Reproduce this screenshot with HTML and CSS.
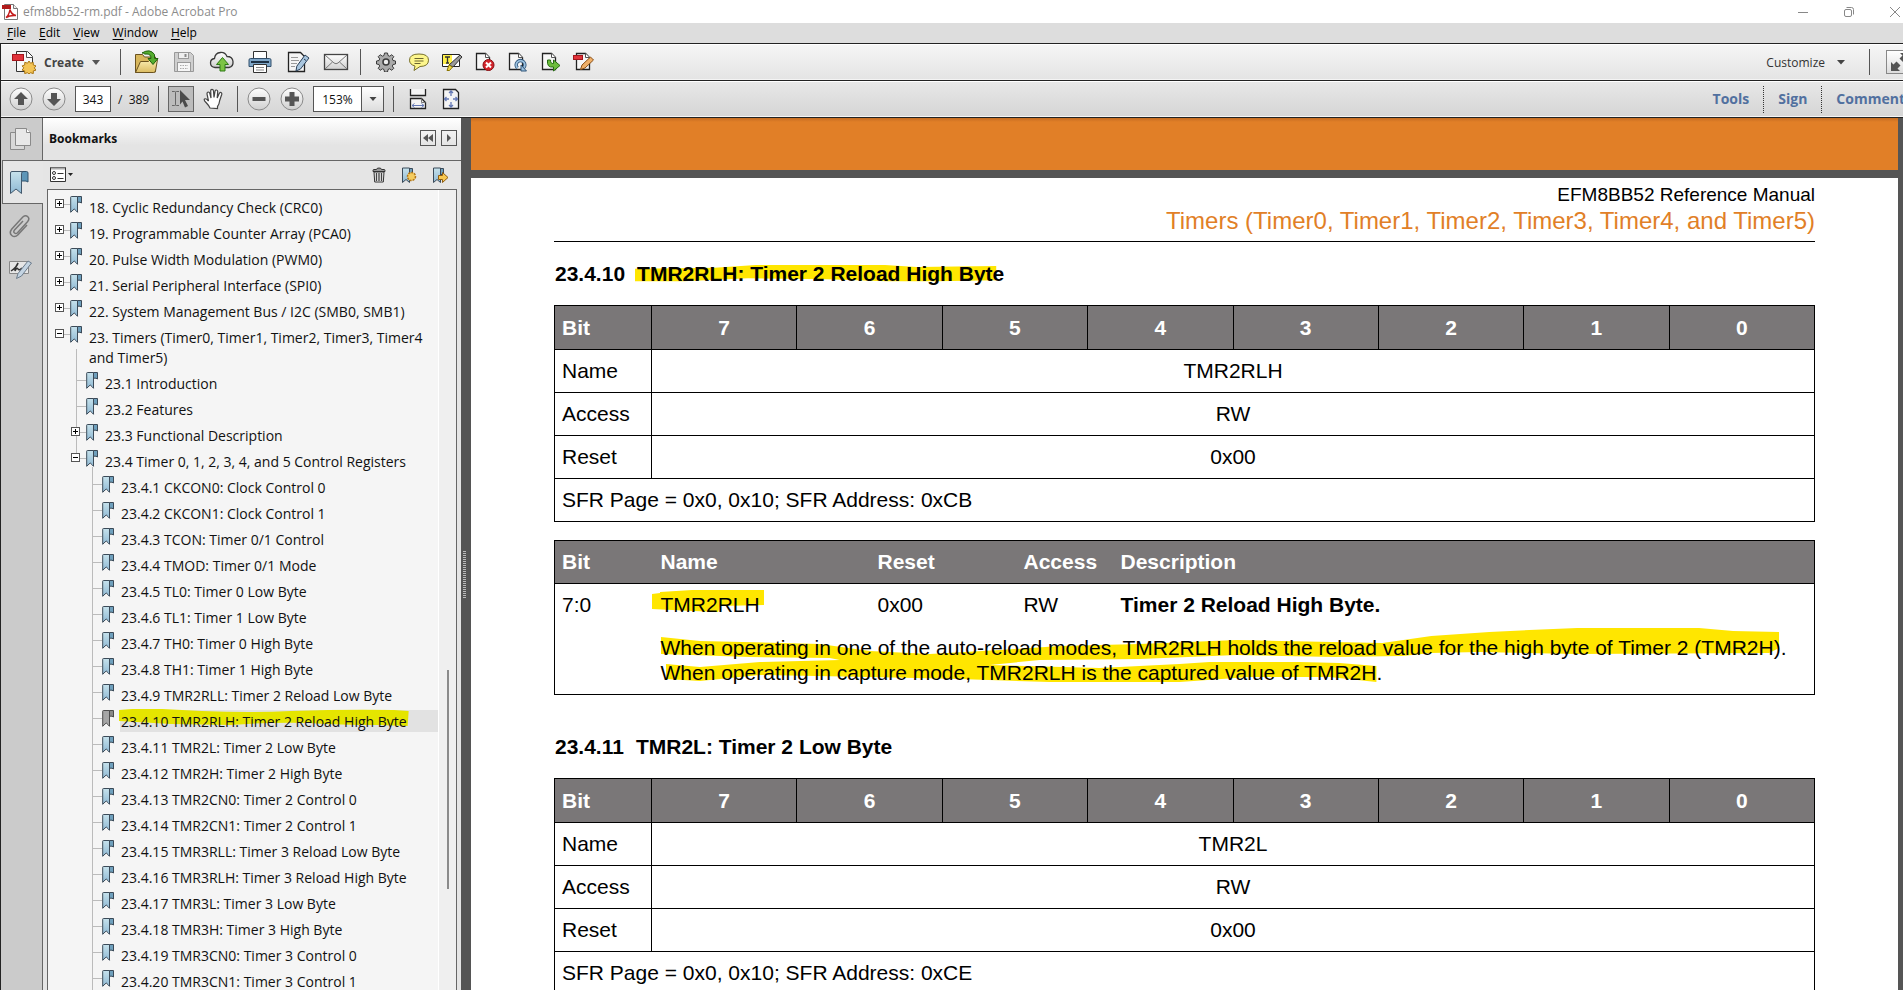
FILE: index.html
```html
<!DOCTYPE html>
<html lang="en">
<head>
<meta charset="utf-8">
<title>efm8bb52-rm.pdf - Adobe Acrobat Pro</title>
<link rel="stylesheet" href="styles.css">
</head>
<body>
<svg class="defs" aria-hidden="true">
  <defs>
    <linearGradient id="g-blue" x1="0" y1="0" x2="0" y2="1"><stop offset="0" stop-color="#c6e2ec"/><stop offset="1" stop-color="#8fb9d4"/></linearGradient>
    <linearGradient id="g-silver" x1="0" y1="0" x2="0" y2="1"><stop offset="0" stop-color="#ffffff"/><stop offset="1" stop-color="#cfcfcf"/></linearGradient>
    <linearGradient id="g-folder" x1="0" y1="0" x2="0" y2="1"><stop offset="0" stop-color="#fbeeb4"/><stop offset="1" stop-color="#dcbc62"/></linearGradient>
  </defs>
  <symbol id="bm" viewBox="0 0 12 17">
    <path d="M7.500 .5h4v6.500l-1.500-.8h-2.500z" fill="#6fa0bd" stroke="#3b4a58"/>
    <path d="M.7 1.200q0-.7.7-.7h6.100v15.800l-1.100-1.300-2.200-2-2.200 2-1.300 1.300z" fill="url(#g-blue)" stroke="#3b4a58"/>
  </symbol>
  <symbol id="bm-grey" viewBox="0 0 12 17">
    <path d="M7.500 .5h4v6.500l-1.500-.8h-2.500z" fill="#8a8a8a" stroke="#4d4d4d"/>
    <path d="M.7 1.200q0-.7.7-.7h6.100v15.800l-1.100-1.300-2.200-2-2.200 2-1.300 1.300z" fill="#a6a6a6" stroke="#4d4d4d"/>
  </symbol>
</svg>

<div class="app">
  <header class="titlebar">
    <svg class="app-icon" width="16" height="16" viewBox="0 0 16 16" aria-hidden="true"><path d="M2.500 .5h9l4 4v11h-13z" fill="#fff" stroke="#777"/><path d="M11.500 .5v4h4" fill="#eee" stroke="#777"/><rect x="0" y="1" width="9" height="4" fill="#b01c1c"/><path d="M4 13.500q3-2 4-8 1 5 6 6-6-.5-10 2z" fill="none" stroke="#c41d1d" stroke-width="1.500"/></svg>
    <span class="doc-name">efm8bb52-rm.pdf - Adobe Acrobat Pro</span>
    <div class="win-controls">
      <button type="button" aria-label="Minimize"><svg width="12" height="12" viewBox="0 0 12 12"><path d="M1 6.500h10" stroke="#888"/></svg></button>
      <button type="button" aria-label="Restore"><svg width="12" height="12" viewBox="0 0 12 12" fill="none" stroke="#888"><rect x="1.500" y="3.500" width="7" height="7" rx="1.500"/><path d="M3.500 1.500h5q2 0 2 2v5"/></svg></button>
      <button type="button" aria-label="Close"><svg width="12" height="12" viewBox="0 0 12 12"><path d="M1 1l10 10M11 1l-10 10" stroke="#888"/></svg></button>
    </div>
  </header>

  <nav class="menubar">
    <button type="button"><u>F</u>ile</button>
    <button type="button"><u>E</u>dit</button>
    <button type="button"><u>V</u>iew</button>
    <button type="button"><u>W</u>indow</button>
    <button type="button"><u>H</u>elp</button>
  </nav>

  <div class="toolbar toolbar-main">
    <button type="button" class="create">
      <svg width="24" height="24" viewBox="0 0 24 24"><path d="M4.500 1.500h11l5 5v15h-16z" fill="#f8f8f8" stroke="#333"/><path d="M14.500 1.500v6h6" fill="#fff" stroke="#555"/><rect x=".5" y="4.500" width="11" height="6" fill="#e0323a" stroke="#a3161c"/><path d="M17 11l1.500 2.200 2.700-.9.100 2.700 2.700.9-1.700 2 1.700 2.200-2.700.8v2.700l-2.700-.9-1.600 1.300-1.600-1.300-2.700.9v-2.700l-2.600-.8 1.600-2.200-1.600-2 2.600-.9.100-2.700 2.700.9z" fill="#f3c455" stroke="#a87414"/></svg>
      <span>Create</span>
      <svg class="caret" width="8" height="5" viewBox="0 0 8 5"><path d="M0 0h8l-4 5z" fill="#555"/></svg>
    </button>
    <span class="sep"></span>
    <div class="group group-wide">
      <button type="button" aria-label="Open"><svg width="26" height="24" viewBox="0 0 26 24"><path d="M2.500 22.500v-18h7l2 2.500h11v15z" fill="#d8b75c" stroke="#6a5220"/><path d="M2.500 22.500l5-11h8l2-2h7l-2 11.500q-.5 1.500-2 1.500z" fill="url(#g-folder)" stroke="#6a5220"/><path d="M9 3q8-5 12.500 1.500v4h3.500l-5 6-5-6h3q0-5-5-4.500-2 .5-2.500-1z" fill="#55ad2f" stroke="#22600f"/></svg></button>
      <button type="button" aria-label="Save" disabled><svg width="22" height="22" viewBox="0 0 22 22"><path d="M1.500 1.500h16l3 3v16h-19z" fill="#cfcfcf" stroke="#999"/><rect x="5.500" y="1.500" width="10" height="6" fill="#eee" stroke="#999"/><path d="M12.500 3v3" stroke="#888" stroke-width="2"/><rect x="4.500" y="11.500" width="13" height="9" fill="#f6f6f6" stroke="#999"/><path d="M7 14.500h8M7 17.500h8" stroke="#aaa" stroke-dasharray="1.500 1"/></svg></button>
      <button type="button" aria-label="Upload"><svg width="26" height="24" viewBox="0 0 26 24"><path d="M6 17.500q-4.500-.5-4.500-4.500t4-4.500q.5-5.500 6-6 4.500-.5 6.500 4 5.500 0 6 5 .500 5-4 6z" fill="url(#g-silver)" stroke="#3a3a3a" stroke-width="1.300"/><path d="M13.500 7.500l6 7h-3.500v6.500h-5v-6.500h-3.500z" fill="#7cc444" stroke="#2c7a14"/></svg></button>
      <button type="button" aria-label="Print"><svg width="24" height="24" viewBox="0 0 24 24"><path d="M5.500 1.500h13v9h-13z" fill="#fff" stroke="#333"/><path d="M2.500 8.500h19q1.500 0 1.500 1.500v6.500h-22v-6.500q0-1.500 1.500-1.500z" fill="#7ea6c8" stroke="#33506c"/><path d="M3 12h18" stroke="#1e3246" stroke-width="2"/><path d="M5.500 14.500h13v8h-13z" fill="#fff" stroke="#333"/><path d="M8 17.500h8M8 20h8" stroke="#888"/></svg></button>
      <button type="button" aria-label="Edit text"><svg width="24" height="24" viewBox="0 0 24 24"><path d="M2.500 2.500h12l4 4v15h-16z" fill="#f5f5f5" stroke="#222" stroke-width="1.300"/><path d="M5 7.500h7M5 10.500h8M5 13.500h6M5 16.500h4" stroke="#999"/><path d="M19 5l4 3-8.500 11-4.500 2 .8-4.800z" fill="#a9c6df" stroke="#2b4058"/><path d="M18 9l2 1.500" stroke="#2b4058"/></svg></button>
      <button type="button" aria-label="Send mail"><svg width="26" height="20" viewBox="0 0 26 20"><rect x="1.500" y="2.500" width="23" height="15" fill="url(#g-silver)" stroke="#444" stroke-width="1.300"/><path d="M2 3l9 8q2 1.500 4 0l9-8M2 17l7.500-7M24 17l-7.500-7" fill="none" stroke="#777"/></svg></button>
    </div>
    <span class="sep"></span>
    <div class="group group-tight">
      <button type="button" aria-label="Preferences"><svg width="20" height="20" viewBox="0 0 20 20"><path d="M8.500 1h3l.5 2.500 1.700.7 2.100-1.500 2 2-1.500 2.200.7 1.600 2.500.5v3l-2.500.5-.7 1.600 1.500 2.200-2 2-2.200-1.500-1.600.7-.5 2.500h-3l-.5-2.500-1.600-.7-2.200 1.500-2-2 1.500-2.200-.7-1.600-2.500-.5v-3l2.500-.5.7-1.600-1.500-2.200 2-2 2.200 1.500 1.600-.7z" fill="#aaa" stroke="#3a3a3a"/><circle cx="10" cy="10" r="3" fill="#eee" stroke="#3a3a3a" stroke-width="1.500"/></svg></button>
      <button type="button" aria-label="Add comment"><svg width="22" height="20" viewBox="0 0 22 20"><path d="M11 2q9.500 0 9.500 6.200t-8.500 6.300l-6 4 1-4.500q-5.500-1.500-5.500-5.800 0-6.200 9.500-6.200z" fill="#fdf68c" stroke="#77702a"/><path d="M6.500 6.500h9M6.500 9h9M6.500 11.500h6" stroke="#6a6430"/></svg></button>
      <button type="button" aria-label="Highlight text"><svg width="22" height="20" viewBox="0 0 22 20"><path d="M1.500 2.500h17v12h-17z" fill="#fff" stroke="#222"/><rect x="2" y="3" width="9" height="9" fill="#fff04a"/><path d="M4 5h5M6.500 5v6M5 11h3" stroke="#333" stroke-width="1.300"/><path d="M19 3l2 2-9 10-4-2z" fill="#999" stroke="#333"/><path d="M8 13l3.500 2-3 3.500h-2.500z" fill="#f0d848" stroke="#8a7400"/></svg></button>
      <button type="button" aria-label="Delete page"><svg width="22" height="20" viewBox="0 0 22 20"><path d="M2.500 1.500h9l4 4v12h-13z" fill="#f7f7f7" stroke="#222" stroke-width="1.300"/><path d="M11.500 1.500v4h4" fill="#fff" stroke="#555"/><circle cx="14.500" cy="13" r="5.500" fill="#d2232a" stroke="#8b0f14"/><path d="M12 10.500l5 5M17 10.500l-5 5" stroke="#fff" stroke-width="2"/></svg></button>
      <button type="button" aria-label="Rotate page"><svg width="22" height="20" viewBox="0 0 22 20"><path d="M2.500 1.500h9l4 4v12h-13z" fill="#f7f7f7" stroke="#222" stroke-width="1.300"/><path d="M11.500 1.500v4h4" fill="#fff" stroke="#555"/><path d="M10.500 16a4.300 4.300 0 1 1 6 0" fill="none" stroke="#2f5478" stroke-width="3.500"/><path d="M10.500 16a4.300 4.300 0 1 1 6 0" fill="none" stroke="#9cc2e0" stroke-width="1.800"/><path d="M14 13v6h5.500z" fill="#9cc2e0" stroke="#2f5478"/></svg></button>
      <button type="button" aria-label="Extract page"><svg width="22" height="20" viewBox="0 0 22 20"><path d="M2.500 1.500h9l4 4v12h-13z" fill="#f7f7f7" stroke="#222" stroke-width="1.300"/><path d="M11.500 1.500v4h4" fill="#fff" stroke="#555"/><path d="M7.500 8q-1 8 6 7v4l6.500-5.500-6.500-5.500v3.500q-3 .5-3-3.500z" fill="#6cbc3c" stroke="#246c10"/></svg></button>
      <button type="button" aria-label="Edit PDF"><svg width="22" height="20" viewBox="0 0 22 20"><path d="M3.500 1.500h9l4 4v12h-13z" fill="#f7f7f7" stroke="#222" stroke-width="1.300"/><path d="M12.500 1.500v4h4" fill="#fff" stroke="#555"/><rect x=".5" y="3.500" width="9" height="4" fill="#e0323a" stroke="#a3161c"/><path d="M17.500 5l3 3-8.500 8-4.500 1.500 1.500-4.500z" fill="#f0b068" stroke="#8a5018"/></svg></button>
    </div>
    <div class="right right-main">
      <button type="button" class="customize"><span>Customize</span><svg class="caret" width="8" height="5" viewBox="0 0 8 5"><path d="M0 0h8l-4 4.500z" fill="#444"/></svg></button>
      <span class="sep"></span>
      <button type="button" class="fullscreen" aria-label="Full screen"><svg width="20" height="20" viewBox="0 0 20 20" fill="#555"><path d="M1 19v-9l2.500 2.500 3-3 4 4-3 3 2.500 2.500zM19 1v9l-2.500-2.500-3 3-4-4 3-3-2.500-2.500z"/></svg></button>
    </div>
  </div>

  <div class="toolbar toolbar-nav">
    <button type="button" class="round" aria-label="Previous page"><svg width="24" height="24" viewBox="0 0 24 24"><circle cx="12" cy="12" r="11" fill="url(#g-silver)" stroke="#8a8a8a"/><path d="M12 5l7 7h-4v6h-6v-6h-4z" fill="#555"/></svg></button>
    <button type="button" class="round" aria-label="Next page"><svg width="24" height="24" viewBox="0 0 24 24"><circle cx="12" cy="12" r="11" fill="url(#g-silver)" stroke="#8a8a8a"/><path d="M12 19l7-7h-4v-6h-6v6h-4z" fill="#555"/></svg></button>
    <input class="page-no" type="text" value="343" aria-label="Page number">
    <span class="page-total">/&nbsp; 389</span>
    <span class="sep"></span>
    <button type="button" class="tool-select" aria-label="Select tool"><svg width="22" height="22" viewBox="0 0 22 22"><path d="M2 3.500h2.500q1 0 1 1v12q0 1-1 1h-2.500M9 3.500h-2.500q-1 0-1 1M9 17.500h-2.500q-1 0-1-1" fill="none" stroke="#666"/><path d="M10 2l10 10h-5l3 6-3 1.500-2.500-6-2.500 3z" fill="#4a4a4a"/></svg></button>
    <button type="button" class="tool-hand" aria-label="Hand tool"><svg width="22" height="22" viewBox="0 0 22 22"><path d="M7 20q-1.500-3-4-5.500t-1.500-3.500q1.500-1 4 2l-1.500-7q0-2 1.300-2t1.700 2l1 4-.3-7q0-1.700 1.300-1.700t1.500 1.700l.5 6.500 1-6q.2-1.700 1.500-1.500t1.200 1.800l-.5 6.200 2-4.500q.7-1.500 1.800-1t.7 2l-2 6q-.5 4-2.200 6v2z" fill="#fff" stroke="#444" stroke-width="1.200"/></svg></button>
    <span class="sep"></span>
    <button type="button" class="round" aria-label="Zoom out"><svg width="24" height="24" viewBox="0 0 24 24"><circle cx="12" cy="12" r="11" fill="url(#g-silver)" stroke="#8a8a8a"/><path d="M5.500 10h13v4h-13z" fill="#555"/></svg></button>
    <button type="button" class="round" aria-label="Zoom in"><svg width="24" height="24" viewBox="0 0 24 24"><circle cx="12" cy="12" r="11" fill="url(#g-silver)" stroke="#8a8a8a"/><path d="M9.500 5h5v4.500h4.500v5h-4.500v4.500h-5v-4.500h-4.500v-5h4.500z" fill="#555"/></svg></button>
    <div class="zoom">
      <select aria-label="Zoom level"><option>153%</option><option>100%</option></select>
      <span class="zoom-arrow"><svg width="8" height="5" viewBox="0 0 8 5"><path d="M.5 0h7l-3.500 4z" fill="#444"/></svg></span>
    </div>
    <span class="sep"></span>
    <button type="button" class="fit" aria-label="Fit width"><svg width="18" height="22" viewBox="0 0 18 22"><path d="M1.500 1v6.500h15v-6.500" fill="#f4f4f4" stroke="#222" stroke-width="1.300"/><path d="M1.500 20.500v-10h11l4 4v6z" fill="#f4f4f4" stroke="#222" stroke-width="1.300"/><path d="M12.500 10.500v4h4" fill="none" stroke="#777"/><path d="M3 17.500h12M5.500 15.500l-2.500 2 2.500 2M12.500 15.500l2.500 2-2.500 2" fill="none" stroke="#6478b4"/></svg></button>
    <button type="button" class="fit" aria-label="Fit page"><svg width="18" height="22" viewBox="0 0 18 22"><path d="M1.500 1.500h12l3 3v16h-15z" fill="#f4f4f4" stroke="#222" stroke-width="1.300"/><path d="M9 3v5M9 14v5M3 11h4M11 11h4M7 5l2-2 2 2M7 17l2 2 2-2M4.500 9l-2 2 2 2M13.500 9l2 2-2 2" fill="none" stroke="#6478b4" stroke-width="1.300"/></svg></button>
    <div class="right right-nav">
      <button type="button">Tools</button>
      <button type="button">Sign</button>
      <button type="button">Comment</button>
    </div>
  </div>

  <div class="workspace">
    <nav class="rail">
      <button type="button" aria-label="Page thumbnails"><svg width="24" height="26" viewBox="0 0 24 26"><path d="M2.500 6.500h14v17h-14z" fill="#d8d8d8" stroke="#8a8a8a"/><path d="M7.500 2.500h11l4 4v13h-15z" fill="#e8e8e8" stroke="#8a8a8a"/><path d="M18.500 2.500v4h4" fill="#fff" stroke="#8a8a8a"/></svg></button>
      <button type="button" class="active" aria-label="Bookmarks"><svg width="20" height="25" viewBox="0 0 20 25"><path d="M12.500 1.500h5q1.500 0 1.500 1.500v9q-2-1.500-4-1h-2.500z" fill="#5d96b8" stroke="#31536d"/><path d="M1.500 3q0-1.500 1.500-1.500h11q-1.500.5-1.500 2v20l-5.500-4.500-5.500 4.500z" fill="url(#g-blue)" stroke="#42586c"/></svg></button>
      <button type="button" aria-label="Attachments"><svg width="24" height="26" viewBox="0 0 24 26"><path d="M15 8l-8.500 9q-1.500 2 0 3t3-.3l10-11q2.500-3 .3-5t-5 .3l-11 12q-3 4 0 6.500t6.200-.8l9-9.700" fill="none" stroke="#777" stroke-width="1.500"/></svg></button>
      <button type="button" aria-label="Signatures"><svg width="26" height="22" viewBox="0 0 26 22"><path d="M2.500 3.500h19v12h-19z" fill="#e6e6e6" stroke="#888"/><path d="M4 13q6-4 7-8-3 4-3 8 2-4 3-2t4-1" fill="none" stroke="#333" stroke-width="1.500"/><path d="M21 3l3.500 2-10 13-5 2.500 1.500-5z" fill="#c4d4e2" stroke="#6c7c8c"/></svg></button>
    </nav>

    <aside class="panel">
      <div class="panel-head">
        <h2>Bookmarks</h2>
        <button type="button" aria-label="Collapse panel"><svg width="12" height="8" viewBox="0 0 12 8" fill="#555"><path d="M6 0v8l-5-4zM11 0v8l-5-4z"/></svg></button>
        <button type="button" aria-label="Expand panel"><svg width="6" height="8" viewBox="0 0 6 8" fill="#555"><path d="M1 0v8l4-4z"/></svg></button>
      </div>
      <div class="panel-tools">
        <button type="button" class="options" aria-label="Options"><svg width="24" height="16" viewBox="0 0 24 16"><path d="M.5 .5h15v14h-15z" fill="#fff" stroke="#333"/><path d="M1 1.500h14" stroke="#aaa" stroke-width="2"/><circle cx="4" cy="6" r="1.500" fill="none" stroke="#333"/><circle cx="4" cy="11" r="1.500" fill="none" stroke="#333"/><path d="M7.500 6.500h6M7.500 11.500h6" stroke="#333"/><path d="M18 6h5l-2.500 3z" fill="#222"/></svg></button>
        <button type="button" aria-label="Delete bookmark"><svg width="14" height="16" viewBox="0 0 14 16"><path d="M2 5h10l-.7 10h-8.600z" fill="#eee" stroke="#333"/><path d="M1 3.500q0-1 1-1h2.500q0-1.500 2.500-1.500t2.500 1.500h2.500q1 0 1 1v1h-12z" fill="#999" stroke="#333"/><path d="M4.500 6v8M7 6v8M9.500 6v8" stroke="#444" stroke-width="1.300"/></svg></button>
        <button type="button" aria-label="New bookmark"><svg width="16" height="17" viewBox="0 0 16 17"><path d="M7.500 1.500h4v6h-4z" fill="#6fa0bd" stroke="#3b4a58"/><path d="M1.500 1h7v14.500l-3.500-3-3.500 3z" fill="url(#g-blue)" stroke="#3b4a58"/><circle cx="10.500" cy="9.500" r="4" fill="#f5cc60" stroke="#b0761a" stroke-width="1.500" stroke-dasharray="2 1"/></svg></button>
        <button type="button" aria-label="Go to bookmark"><svg width="17" height="17" viewBox="0 0 17 17"><path d="M7.500 1.500h4v6h-4z" fill="#6fa0bd" stroke="#3b4a58"/><path d="M1.500 1h7v14.500l-3.500-3-3.500 3z" fill="url(#g-blue)" stroke="#3b4a58"/><path d="M6.500 8.500h4v-3l5.500 5-5.500 5v-3h-4z" fill="#f8c850" stroke="#8f5c10"/></svg></button>
      </div>
      <div class="tree-box">
        <ul class="tree">
          <li><div class="row"><button type="button" class="toggle" aria-label="Expand"></button><i class="stub"></i><svg class="bm"><use href="#bm"/></svg><a href="#s">18. Cyclic Redundancy Check (CRC0)</a></div></li>
          <li><div class="row"><button type="button" class="toggle" aria-label="Expand"></button><i class="stub"></i><svg class="bm"><use href="#bm"/></svg><a href="#s">19. Programmable Counter Array (PCA0)</a></div></li>
          <li><div class="row"><button type="button" class="toggle" aria-label="Expand"></button><i class="stub"></i><svg class="bm"><use href="#bm"/></svg><a href="#s">20. Pulse Width Modulation (PWM0)</a></div></li>
          <li><div class="row"><button type="button" class="toggle" aria-label="Expand"></button><i class="stub"></i><svg class="bm"><use href="#bm"/></svg><a href="#s">21. Serial Peripheral Interface (SPI0)</a></div></li>
          <li><div class="row"><button type="button" class="toggle" aria-label="Expand"></button><i class="stub"></i><svg class="bm"><use href="#bm"/></svg><a href="#s">22. System Management Bus / I2C (SMB0, SMB1)</a></div></li>
          <li><div class="row"><button type="button" class="toggle open" aria-label="Collapse"></button><i class="stub"></i><svg class="bm"><use href="#bm"/></svg><a href="#s">23. Timers (Timer0, Timer1, Timer2, Timer3, Timer4 and Timer5)</a></div>
            <ul class="level-2">
              <li><div class="row"><i class="branch"></i><svg class="bm"><use href="#bm"/></svg><a href="#s">23.1 Introduction</a></div></li>
              <li><div class="row"><i class="branch"></i><svg class="bm"><use href="#bm"/></svg><a href="#s">23.2 Features</a></div></li>
              <li><div class="row"><button type="button" class="toggle" aria-label="Expand"></button><i class="stub"></i><svg class="bm"><use href="#bm"/></svg><a href="#s">23.3 Functional Description</a></div></li>
              <li><div class="row"><button type="button" class="toggle open" aria-label="Collapse"></button><i class="stub"></i><svg class="bm"><use href="#bm"/></svg><a href="#s">23.4 Timer 0, 1, 2, 3, 4, and 5 Control Registers</a></div>
                <ul class="level-3">
                  <li><div class="row"><i class="branch"></i><svg class="bm"><use href="#bm"/></svg><a href="#s">23.4.1 CKCON0: Clock Control 0</a></div></li>
                  <li><div class="row"><i class="branch"></i><svg class="bm"><use href="#bm"/></svg><a href="#s">23.4.2 CKCON1: Clock Control 1</a></div></li>
                  <li><div class="row"><i class="branch"></i><svg class="bm"><use href="#bm"/></svg><a href="#s">23.4.3 TCON: Timer 0/1 Control</a></div></li>
                  <li><div class="row"><i class="branch"></i><svg class="bm"><use href="#bm"/></svg><a href="#s">23.4.4 TMOD: Timer 0/1 Mode</a></div></li>
                  <li><div class="row"><i class="branch"></i><svg class="bm"><use href="#bm"/></svg><a href="#s">23.4.5 TL0: Timer 0 Low Byte</a></div></li>
                  <li><div class="row"><i class="branch"></i><svg class="bm"><use href="#bm"/></svg><a href="#s">23.4.6 TL1: Timer 1 Low Byte</a></div></li>
                  <li><div class="row"><i class="branch"></i><svg class="bm"><use href="#bm"/></svg><a href="#s">23.4.7 TH0: Timer 0 High Byte</a></div></li>
                  <li><div class="row"><i class="branch"></i><svg class="bm"><use href="#bm"/></svg><a href="#s">23.4.8 TH1: Timer 1 High Byte</a></div></li>
                  <li><div class="row"><i class="branch"></i><svg class="bm"><use href="#bm"/></svg><a href="#s">23.4.9 TMR2RLL: Timer 2 Reload Low Byte</a></div></li>
                  <li><div class="row"><i class="branch"></i><svg class="bm"><use href="#bm-grey"/></svg><a href="#s" class="current"><span class="mark mark-tree"><svg viewBox="0 0 294 18" preserveAspectRatio="none"><path d="M0 1q20-2 44-1l40 2q50 2 90 0 60-2 105-1l15 1-1 15-30-1q-40 0-70-2-40-1-80 2l-60-1-53-3z" fill="#e5e500"/></svg>23.4.10 TMR2RLH: Timer 2 Reload High Byte</span></a></div></li>
                  <li><div class="row"><i class="branch"></i><svg class="bm"><use href="#bm"/></svg><a href="#s">23.4.11 TMR2L: Timer 2 Low Byte</a></div></li>
                  <li><div class="row"><i class="branch"></i><svg class="bm"><use href="#bm"/></svg><a href="#s">23.4.12 TMR2H: Timer 2 High Byte</a></div></li>
                  <li><div class="row"><i class="branch"></i><svg class="bm"><use href="#bm"/></svg><a href="#s">23.4.13 TMR2CN0: Timer 2 Control 0</a></div></li>
                  <li><div class="row"><i class="branch"></i><svg class="bm"><use href="#bm"/></svg><a href="#s">23.4.14 TMR2CN1: Timer 2 Control 1</a></div></li>
                  <li><div class="row"><i class="branch"></i><svg class="bm"><use href="#bm"/></svg><a href="#s">23.4.15 TMR3RLL: Timer 3 Reload Low Byte</a></div></li>
                  <li><div class="row"><i class="branch"></i><svg class="bm"><use href="#bm"/></svg><a href="#s">23.4.16 TMR3RLH: Timer 3 Reload High Byte</a></div></li>
                  <li><div class="row"><i class="branch"></i><svg class="bm"><use href="#bm"/></svg><a href="#s">23.4.17 TMR3L: Timer 3 Low Byte</a></div></li>
                  <li><div class="row"><i class="branch"></i><svg class="bm"><use href="#bm"/></svg><a href="#s">23.4.18 TMR3H: Timer 3 High Byte</a></div></li>
                  <li><div class="row"><i class="branch"></i><svg class="bm"><use href="#bm"/></svg><a href="#s">23.4.19 TMR3CN0: Timer 3 Control 0</a></div></li>
                  <li><div class="row"><i class="branch"></i><svg class="bm"><use href="#bm"/></svg><a href="#s">23.4.20 TMR3CN1: Timer 3 Control 1</a></div></li>
                </ul>
              </li>
            </ul>
          </li>
        </ul>
        <div class="scroll-track"><div class="thumb"></div></div>
      </div>
    </aside>

    <div class="splitter"><span class="grip"></span></div>

    <main class="viewer">
      <div class="prev-page"></div>
      <article class="page">
        <header class="page-head">
          <p class="manual">EFM8BB52 Reference Manual</p>
          <p class="chapter">Timers (Timer0, Timer1, Timer2, Timer3, Timer4, and Timer5)</p>
        </header>

        <section id="s">
          <h3><span>23.4.10</span><span class="mark mark-title"><svg viewBox="0 0 370 20" preserveAspectRatio="none"><path d="M0 4l80-1 42-3h130l32 2 80-1v15l-60 1h-50l-60-2-80-1-65 3h-49z" fill="#ffe600"/></svg>TMR2RLH: Timer 2 Reload High Byte</span></h3>
          <table class="bits">
            <colgroup><col class="c-label"><col span="8"></colgroup>
            <thead><tr><th>Bit</th><th>7</th><th>6</th><th>5</th><th>4</th><th>3</th><th>2</th><th>1</th><th>0</th></tr></thead>
            <tbody>
              <tr><td>Name</td><td colspan="8">TMR2RLH</td></tr>
              <tr><td>Access</td><td colspan="8">RW</td></tr>
              <tr><td>Reset</td><td colspan="8">0x00</td></tr>
              <tr><td colspan="9">SFR Page = 0x0, 0x10; SFR Address: 0xCB</td></tr>
            </tbody>
          </table>
          <table class="fields">
            <colgroup><col class="f-bit"><col class="f-name"><col class="f-reset"><col class="f-access"><col></colgroup>
            <thead><tr><th>Bit</th><th>Name</th><th>Reset</th><th>Access</th><th>Description</th></tr></thead>
            <tbody>
              <tr><td>7:0</td><td><span class="mark mark-cell"><svg viewBox="0 0 112 22" preserveAspectRatio="none"><path d="M0 4l8-1v-1l32-2h72v15l-44 1-2 6-25-1-41-2z" fill="#ffe600"/></svg>TMR2RLH</span></td><td>0x00</td><td>RW</td><td><b>Timer 2 Reload High Byte.</b></td></tr>
              <tr><td></td><td colspan="4" class="desc"><span class="mark mark-para"><svg viewBox="661 625 1127 60" preserveAspectRatio="none"><path d="M661 636L700 640 820 643 870 650 930 653 1000 649 1060 645 1140 643 1237 639 1383 642 1432 635 1490 631 1530 629 1578 627H1700L1734 630 1780 631V647L1770 652 1578 653 1480 651 1432 652 1403 655 1335 656 1237 654 1140 658 1040 659 990 664 1100 667 1180 663 1210 661H1300L1340 662 1377 665V681L1330 676H1250L1180 681 1050 681 960 678 870 676 760 674 700 680 666 678V663L700 666 760 661 840 659 830 657 750 656 661 653Z" fill="#ffe600"/></svg>When operating in one of the auto-reload modes, TMR2RLH holds the reload value for the high byte of Timer 2 (TMR2H).<br>When operating in capture mode, TMR2RLH is the captured value of TMR2H.</span></td></tr>
            </tbody>
          </table>
        </section>

        <section>
          <h3><span>23.4.11</span><span>TMR2L: Timer 2 Low Byte</span></h3>
          <table class="bits">
            <colgroup><col class="c-label"><col span="8"></colgroup>
            <thead><tr><th>Bit</th><th>7</th><th>6</th><th>5</th><th>4</th><th>3</th><th>2</th><th>1</th><th>0</th></tr></thead>
            <tbody>
              <tr><td>Name</td><td colspan="8">TMR2L</td></tr>
              <tr><td>Access</td><td colspan="8">RW</td></tr>
              <tr><td>Reset</td><td colspan="8">0x00</td></tr>
              <tr><td colspan="9">SFR Page = 0x0, 0x10; SFR Address: 0xCE</td></tr>
            </tbody>
          </table>
        </section>
      </article>
    </main>
  </div>
</div>
</body>
</html>
```

FILE: styles.css
```css
* { box-sizing: border-box; }

body {
  margin: 0;
  background: #fff;
  color: #111;
  font-family: "Open Sans", "Noto Sans", sans-serif;
  font-size: 12px;
}

button, input, select { font: inherit; color: inherit; }

button {
  display: flex;
  align-items: center;
  justify-content: center;
  margin: 0;
  padding: 0;
  border: 0;
  background: none;
}

svg { display: block; flex: none; }
ul { margin: 0; padding: 0; list-style: none; }
h2, h3, p { margin: 0; }
.defs { position: absolute; width: 0; height: 0; }

.app {
  display: flex;
  flex-direction: column;
  height: 100vh;
  overflow: hidden;
}

/* Title and menu */
.titlebar {
  display: flex;
  align-items: center;
  gap: 5px;
  height: 23px;
  padding-left: 2px;
  flex: none;
  color: #8c8c8c;
}
.win-controls { display: flex; margin: 0 -15px 0 auto; }
.win-controls button { width: 46px; height: 20px; }

.menubar {
  display: flex;
  gap: 13px;
  height: 20px;
  padding: 0 0 1px 7px;
  flex: none;
  background: #ddd;
  color: #000;
}
.menubar u { text-underline-offset: 2px; }

/* Toolbars */
.toolbar {
  display: flex;
  align-items: center;
  height: 37px;
  flex: none;
  overflow: hidden;
  border-top: 1px solid #222;
  border-left: 1px solid #222;
  box-shadow: inset 0 1px #fff, inset 0 -1px #f4f4f4;
}
.toolbar-main { background: linear-gradient(#f6f6f6, #e4e4e4); }
.toolbar-nav { background: linear-gradient(#e8e8e8, #d5d5d5); }
.sep { width: 1px; height: 26px; background: #555; flex: none; }

.create { gap: 8px; padding: 0 20px 0 11px; font-size: 12px; font-weight: 700; color: #444; }
.group { display: flex; }
.group-wide { padding: 0 5px 0 6px; }
.group-wide button { width: 38px; height: 30px; }
.group-tight { padding-left: 9px; }
.group-tight button { width: 33px; height: 30px; }

.right { display: flex; align-items: center; margin-left: auto; }
.right-main { margin-right: -10px; }
.customize { gap: 12px; padding-right: 24px; color: #333; }
.fullscreen { width: 27px; height: 24px; margin-left: 16px; border: 1px solid #888; background: linear-gradient(#fff, #ddd); }

.toolbar-nav { padding-left: 8px; }
.round { width: 24px; height: 24px; margin-right: 9px; }
.page-no { width: 36px; height: 26px; border: 1px solid #555; background: #fff; text-align: center; padding: 0; }
.page-total { margin: 0 9px 0 7px; }
.tool-select { width: 26px; height: 26px; margin: 0 9px; border: 1px solid #666; background: #bcbcbc; }
.tool-hand { margin-right: 12px; }
.tool-hand + .sep { margin-right: 9px; }
.zoom { display: flex; position: relative; margin-right: 9px; }
.zoom select { width: 71px; height: 26px; padding: 0 0 0 8px; border: 1px solid #555; border-radius: 0; background: #fff; appearance: none; }
.zoom-arrow {
  position: absolute;
  inset: 1px 1px 1px auto;
  width: 22px;
  display: grid;
  place-items: center;
  border-left: 1px solid #555;
  background: linear-gradient(#fff, #ddd);
  pointer-events: none;
}
.fit { margin-left: 15px; }
.right-nav { margin-right: -2px; font-size: 14px; font-weight: 700; color: #51709f; }
.right-nav button { height: 27px; padding: 0 14px 2px; }
.right-nav button + button { border-left: 1px dotted #333; }
.right-nav button:last-child { padding-right: 0; }

/* Work area */
.workspace {
  display: flex;
  flex: 1;
  min-height: 0;
  border-top: 1px solid #222;
  border-left: 1px solid #222;
}

.rail {
  display: flex;
  flex-direction: column;
  width: 42px;
  flex: none;
  background: #cbcbcb;
  border-right: 1px solid #666;
}
.rail button { height: 43px; padding-right: 3px; }
.rail button:first-child { height: 42px; }
.rail .active {
  position: relative;
  height: 44px;
  margin: 0 -1px 0 1px;
  padding-right: 8px;
  border: 1px solid #666;
  border-right: 0;
  background: #e6e6e6;
}

.panel {
  display: flex;
  flex-direction: column;
  width: 418px;
  flex: none;
  background: #e5e5e5;
}
.panel-head {
  display: flex;
  align-items: center;
  gap: 5px;
  height: 43px;
  flex: none;
  padding: 0 4px 2px 6px;
  border-bottom: 1px solid #666;
  background: linear-gradient(#fff, #e4e4e4 65%);
}
.panel-head h2 { margin-right: auto; font-size: 12px; }
.panel-head button { width: 16px; height: 16px; border: 1px solid #555; }
.panel-tools { display: flex; align-items: center; gap: 15px; height: 28px; flex: none; padding: 0 12px 0 7px; }
.options { margin-right: auto; }

.tree-box {
  display: flex;
  flex: 1;
  min-height: 0;
  margin: 0 4px;
  border: 1px solid #666;
  border-bottom: 0;
  background: #f5f5f5;
}
.tree { flex: 1; min-width: 0; overflow: hidden; padding: 5px 0 0 7px; font-size: 14px; }
.tree ul { padding-left: 16px; }
.tree li { position: relative; }
.row { display: flex; align-items: flex-start; }
.row a { flex: 1; margin: 1px 0 3px 6px; padding: 2px 0 0 1px; line-height: 20px; color: #111; text-decoration: none; }
.row .current { background: #e2e2e2; }
.bm { width: 12px; height: 17px; margin-top: 1px; }
.stub { width: 6px; margin-top: 9px; border-top: 1px solid #bbb; }
.branch { width: 10px; margin: 9px 0 0 5px; border-top: 1px solid #bbb; }
.toggle {
  position: relative;
  width: 9px;
  height: 9px;
  margin-top: 4px;
  border: 1px solid #555;
  background:
    linear-gradient(#000, #000) center / 5px 1px no-repeat,
    linear-gradient(#000, #000) center / 1px 5px no-repeat,
    #fff;
}
.toggle.open { background: linear-gradient(#000, #000) center / 5px 1px no-repeat, #fff; }
.level-2 > li::before, .level-3 > li::before {
  content: "";
  position: absolute;
  top: 0;
  bottom: 0;
  left: 5px;
  border-left: 1px solid #bbb;
}
.level-2 > li:first-child::before { top: -22px; }
.level-3 > li:first-child::before { top: -8px; }
.level-2 > li:last-child::before { bottom: auto; height: 8px; }

.scroll-track { width: 18px; flex: none; padding-top: 480px; border-left: 1px solid #fff; background: #efefef; }
.thumb { width: 2px; height: 219px; margin-left: 8px; background: #8a8a8a; }

.splitter { display: flex; align-items: center; width: 10px; flex: none; padding: 0 0 0 2px; background: #555; }
.grip { width: 3px; height: 48px; margin-top: 42px; background: repeating-linear-gradient(#bbb 0 1px, #555 1px 2px); }

/* Document */
.viewer { flex: 1; min-width: 0; overflow: hidden; padding-right: 5px; background: #555; }
.prev-page { height: 52px; margin-bottom: 8px; background: linear-gradient(#c56c22, #e17f27 4px); }
.page {
  min-height: 100%;
  padding: 6px 83px 0 83px;
  background: #fff;
  color: #000;
  font-family: "Liberation Sans", Arial, sans-serif;
  font-size: 21px;
}
.page-head { padding-bottom: 5px; margin-bottom: 20px; border-bottom: 1px solid #000; text-align: right; }
.manual { font-size: 19px; line-height: 22px; }
.chapter { font-size: 24px; line-height: 30px; color: #e17f27; }

section + section { margin-top: 40px; }
h3 { display: flex; gap: 12px; margin-bottom: 19px; padding-left: 1px; font-size: 21px; line-height: 24px; }

table { width: 100%; border-collapse: collapse; table-layout: fixed; border: 1px solid #000; }
th, td { height: 43px; padding: 0 7px; line-height: 24px; text-align: left; }
th { background: #7a7778; color: #fff; }
.bits th, .bits td { border: 1px solid #000; }
.bits th { height: 44px; }
.bits th + th, .bits td + td { text-align: center; }
.c-label { width: 97px; }
.fields { margin-top: 18px; }
.fields thead { border-bottom: 1px solid #000; }
.f-bit { width: 99px; }
.f-name { width: 217px; }
.f-reset { width: 146px; }
.f-access { width: 97px; }
.fields .desc { height: 68px; line-height: 25px; white-space: nowrap; }

/* Marker strokes under text */
.mark { position: relative; z-index: 0; display: inline-block; }
.mark svg { position: absolute; z-index: -1; }
.mark-title svg { left: -2px; top: 3px; width: 100%; height: 19px; }
.mark-tree svg { left: -2px; top: -3px; width: calc(100% + 4px); height: 18px; }
.mark-cell svg { left: -9px; top: -3px; width: calc(100% + 13px); height: 22px; }
.mark-para { vertical-align: middle; }
.mark-para svg { left: 0; top: -9px; width: 100%; height: 60px; }
```
